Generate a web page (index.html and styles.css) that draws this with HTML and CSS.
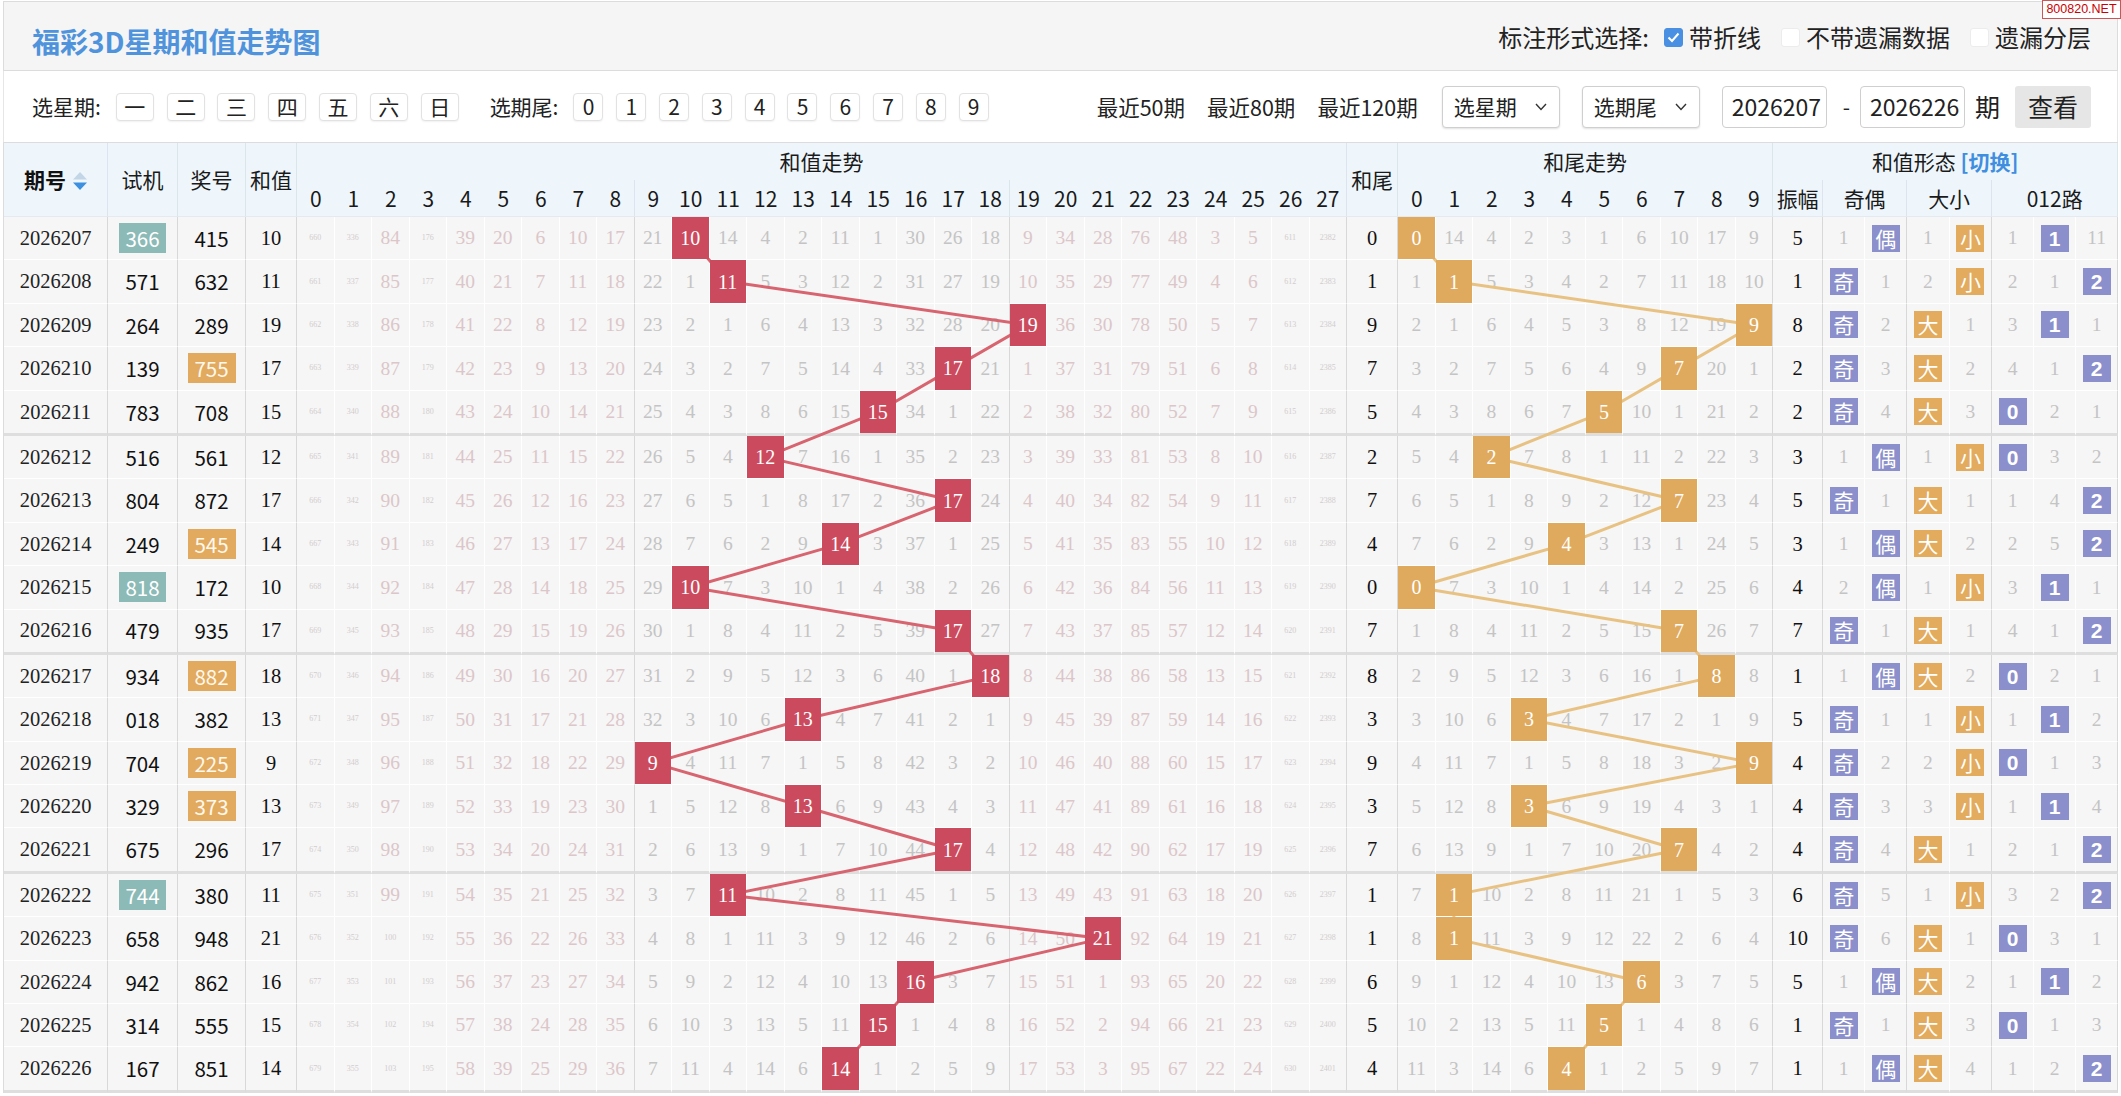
FILE: index.html
```html
<!DOCTYPE html>
<html lang="zh-CN">
<head>
<meta charset="utf-8">
<title>福彩3D星期和值走势图</title>
<link rel="stylesheet" href="styles.css">
</head>
<body>
<div class="page">
  <div class="topbar">
    <h1 class="title">福彩3D星期和值走势图</h1>
    <div class="marks">
      <span class="marks-label">标注形式选择:</span>
      <span class="mark"><span class="cb on"><svg width="17" height="17" viewBox="0 0 17 17"><path d="M3.5 8.5 L7 12 L13.5 4.5" fill="none" stroke="#fff" stroke-width="2"/></svg></span>带折线</span>
      <span class="mark"><span class="cb"></span>不带遗漏数据</span>
      <span class="mark"><span class="cb"></span>遗漏分层</span>
    </div>
  </div>
  <div class="filters">
    <div class="fgroup">
      <span class="flabel">选星期:</span>
      <span class="pill w">一</span><span class="pill w">二</span><span class="pill w">三</span><span class="pill w">四</span><span class="pill w">五</span><span class="pill w">六</span><span class="pill w">日</span>
      <span class="flabel sp">选期尾:</span>
      <span class="pill">0</span><span class="pill">1</span><span class="pill">2</span><span class="pill">3</span><span class="pill">4</span><span class="pill">5</span><span class="pill">6</span><span class="pill">7</span><span class="pill">8</span><span class="pill">9</span>
    </div>
    <div class="fgroup">
      <span class="recent">最近50期</span>
      <span class="recent">最近80期</span>
      <span class="recent last">最近120期</span>
      <span class="sel">选星期<svg width="12" height="8" viewBox="0 0 12 8"><path d="M1 1 L6 6.5 L11 1" fill="none" stroke="#333" stroke-width="1.4"/></svg></span>
      <span class="sel">选期尾<svg width="12" height="8" viewBox="0 0 12 8"><path d="M1 1 L6 6.5 L11 1" fill="none" stroke="#333" stroke-width="1.4"/></svg></span>
      <span class="inp">2026207</span>
      <span class="dash">-</span>
      <span class="inp">2026226</span>
      <span class="qi">期</span>
      <span class="btn">查看</span>
    </div>
  </div>
  <div class="chart" id="chart">
    <table class="trend">
      <colgroup>
        <col class="c-qh"><col class="c-sj"><col class="c-jh"><col class="c-hz">
        <col span="28" class="c-t">
        <col class="c-hw">
        <col span="10" class="c-t">
        <col class="c-zf">
        <col span="2" class="c-oe">
        <col span="2" class="c-bs">
        <col span="3" class="c-r">
      </colgroup>
      <thead>
        <tr class="h1">
          <th rowspan="2" class="gb rs qh-h">期号<svg class="sort" width="14" height="19" viewBox="0 0 14 19"><path d="M7 0 L14 7.5 L0 7.5 Z" fill="#c3d6e8"/><path d="M0 10.5 L14 10.5 L7 18 Z" fill="#3d8fe0"/></svg></th>
          <th rowspan="2" class="gb rs">试机</th>
          <th rowspan="2" class="gb rs">奖号</th>
          <th rowspan="2" class="gb rs">和值</th>
          <th colspan="28" class="gb">和值走势</th>
          <th rowspan="2" class="gb rs">和尾</th>
          <th colspan="10" class="gb">和尾走势</th>
          <th colspan="8" class="gb">和值形态 <b class="switch">[切换]</b></th>
        </tr>
        <tr class="h2">
          <th>0</th><th>1</th><th>2</th><th>3</th><th>4</th><th>5</th><th>6</th><th>7</th><th class="gb">8</th>
          <th>9</th><th>10</th><th>11</th><th>12</th><th>13</th><th>14</th><th>15</th><th>16</th><th>17</th><th class="gb">18</th>
          <th>19</th><th>20</th><th>21</th><th>22</th><th>23</th><th>24</th><th>25</th><th>26</th><th class="gb">27</th>
          <th>0</th><th>1</th><th>2</th><th>3</th><th>4</th><th>5</th><th>6</th><th>7</th><th>8</th><th class="gb">9</th>
          <th class="gb">振幅</th>
          <th colspan="2" class="gb">奇偶</th>
          <th colspan="2" class="gb">大小</th>
          <th colspan="3" class="gb">012路</th>
        </tr>
      </thead>
      <tbody id="rows"></tbody>
    </table>
    <svg class="lines" id="lines"></svg>
  </div>
</div>
<div class="wm">800820.NET</div>
<script src="app.js"></script>
</body>
</html>
```

FILE: styles.css
```css
* { box-sizing: border-box; }
html, body { margin: 0; padding: 0; background: #fff; }
body { font-family: "Noto Sans CJK SC", "Liberation Sans", sans-serif; color: #222; }

.page { margin: 1px 0 0 3px; width: 2115px; }

.topbar {
  height: 70px;
  background: #f5f5f5;
  border: 1px solid #dcdcdc;
  display: flex;
  align-items: center;
  justify-content: space-between;
  padding: 0 26px 0 28px;
}
.title { margin: 9px 0 0; font-size: 28px; line-height: 1; font-weight: 700; color: #4f93dc; }
.marks { display: flex; align-items: center; font-size: 24px; line-height: 1; color: #222; margin-top: 2px; }
.marks-label { margin-right: 15px; }
.mark { display: flex; align-items: center; }
.mark + .mark { margin-left: 20px; }
.cb { width: 19px; height: 19px; border-radius: 3px; margin-right: 6px; display: flex; align-items: center; justify-content: center; background: #fff; border: 1px solid #ececec; }
.cb.on { background: #4a90e2; border-color: #4a90e2; }

.filters {
  height: 71px;
  display: flex;
  align-items: center;
  justify-content: space-between;
  padding: 0 26px 0 28px;
  border-left: 1px solid #e6e6e6;
  border-right: 1px solid #e6e6e6;
}
.fgroup { display: flex; align-items: center; font-size: 21px; line-height: 1; }
.flabel { margin-right: 15px; }
.flabel.sp { margin-left: 31px; }
.pill {
  width: 30px; height: 28px;
  border: 1px solid #e2e2e2; border-radius: 4px; background: #fff;
  box-shadow: 0 1px 2px rgba(0,0,0,.06);
  display: flex; align-items: center; justify-content: center;
  font-size: 21px;
}
.pill.w { width: 38px; }
.pill + .pill { margin-left: 12.8px; }
.recent { margin-right: 22px; font-size: 21.5px; }
.recent.last { margin-right: 24px; }
.sel {
  width: 118px; height: 42px;
  border: 1px solid #cfcfcf; border-radius: 4px; background: #fff;
  box-shadow: 0 1px 2px rgba(0,0,0,.12);
  display: flex; align-items: center; justify-content: space-between;
  padding: 0 12px 0 11px; font-size: 21px; margin-right: 22px;
}
.inp {
  width: 105px; height: 42px;
  border: 1px solid #cfcfcf; border-radius: 4px; background: #fff;
  display: flex; align-items: center; padding-left: 9px; font-size: 23px;
}
.dash { margin: 0 10px 0 16px; font-size: 21px; }
.qi { margin-left: 10px; font-size: 25px; }
.btn {
  margin-left: 15px; width: 76px; height: 42px; border-radius: 3px;
  background: #e6e6e6; font-size: 25px; color: #222;
  display: flex; align-items: center; justify-content: center;
}

.chart { position: relative; }
.trend {
  border-collapse: separate; border-spacing: 0; table-layout: fixed;
  width: 2115px;
  border-top: 1px solid #dcdcdc; border-left: 1px solid #dcdcdc;
}
.c-qh { width: 104px; }
.c-sj { width: 70px; }
.c-jh { width: 68px; }
.c-hz { width: 51px; }
.c-t { width: 37.5px; }
.c-hw { width: 51px; }
.c-zf { width: 50px; }
.c-oe { width: 42px; }
.c-bs { width: 42.5px; }
.c-r { width: 42px; }

.trend th {
  background: #eef6fc; font-weight: 400; font-size: 21px; color: #1a1a1a;
  padding: 0; line-height: 1; text-align: center; white-space: nowrap;
}
.trend .h1 th { height: 37px; }
.trend .h2 th { height: 37px; border-bottom: 1px solid #e3eaf1; }
.trend th.rs { border-bottom: 1px solid #e3eaf1; }
.trend th.gb { border-right: 1px solid #dde5ec; }
.trend th.qh-h { font-weight: 700; color: #111; }
.sort { vertical-align: -3px; margin-left: 7px; }
.switch { color: #3f8ee0; font-weight: 700; }

.trend td {
  padding: 0; height: 43.4px;
  border-bottom: 1px solid #fff; border-right: 1px solid #fff;
  background: #f6f6f6; text-align: center; vertical-align: middle;
  font-family: "Liberation Serif", serif; font-size: 19.5px; line-height: 1;
  color: #c4c4c4; white-space: nowrap;
}
.trend tr.grp td { height: 45.4px; border-bottom: 3px solid #dedede; }
.trend td.gb { border-right: 1px solid #d8d8d8; }
.trend td.qh { color: #222; font-size: 20.5px; }
.trend td.hz, .trend td.hw, .trend td.zf { color: #111; font-size: 20.5px; }
.trend td.sj, .trend td.jh { font-family: "Noto Sans CJK SC", "Liberation Sans", sans-serif; color: #111; font-size: 20.5px; }
.trend td.pk { color: #dcc6c9; }
.trend td.tiny { font-size: 8px; color: #d2cccd; }

.hit {
  position: relative; z-index: 2; height: 42.4px;
  display: flex; align-items: center; justify-content: center;
  color: #fff; font-size: 20px;
}
.hit.red { background: #cc4a5d; }
.hit.org { background: #e0aa5e; }
.hl { display: inline-block; width: 47px; height: 30px; line-height: 30px; color: #fff; }
.hl.teal { background: #8cbab7; }
.hl.org { background: #e2aa5f; width: 48px; color: #fff8ec; }
.tag {
  display: inline-flex; width: 28px; height: 27px;
  align-items: center; justify-content: center;
  color: #fff; font-family: "Noto Sans CJK SC", sans-serif; font-size: 21px; line-height: 1;
}
.tag.blue { background: #8b8fcb; }
.tag.org { background: #e2ab5d; }
.tag.num { font-family: "Liberation Sans", sans-serif; font-weight: 700; font-size: 21px; }

.lines { position: absolute; left: 0; top: 0; z-index: 1; pointer-events: none; overflow: visible; }

.wm {
  position: absolute; top: 0; right: 0; width: 79px; height: 19px;
  border: 1px solid #c55; background: #fff; color: #c00;
  font-family: "Liberation Sans", sans-serif; font-size: 12.5px; line-height: 17px;
  text-align: center; z-index: 5;
}
```

FILE: app.js
```js
(function () {
  var data = [
    ['2026207','366','415'],['2026208','571','632'],['2026209','264','289'],['2026210','139','755'],['2026211','783','708'],
    ['2026212','516','561'],['2026213','804','872'],['2026214','249','545'],['2026215','818','172'],['2026216','479','935'],
    ['2026217','934','882'],['2026218','018','382'],['2026219','704','225'],['2026220','329','373'],['2026221','675','296'],
    ['2026222','744','380'],['2026223','658','948'],['2026224','942','862'],['2026225','314','555'],['2026226','167','851']
  ];
  var sjHi = {0:1, 8:1, 15:1};
  var jhHi = {3:1, 7:1, 10:1, 12:1, 13:1};
  var sm = [660,336,84,176,39,20,6,10,17,21,0,14,4,2,11,1,30,26,18,9,34,28,76,48,3,5,611,2382];
  var tm = [0,14,4,2,3,1,6,10,17,9];
  var oe = [1,0], bs = [1,0], r3 = [1,0,11];
  var prevSum = null, html = '';

  data.forEach(function (d, i) {
    var n = d[2];
    var sum = (+n[0]) + (+n[1]) + (+n[2]);
    var tail = sum % 10, c;
    if (i > 0) {
      for (c = 0; c < 28; c++) sm[c]++;
      sm[sum] = 0;
      for (c = 0; c < 10; c++) tm[c]++;
      tm[tail] = 0;
      oe[0]++; oe[1]++; oe[sum % 2 === 1 ? 0 : 1] = 0;
      bs[0]++; bs[1]++; bs[sum >= 14 ? 0 : 1] = 0;
      r3[0]++; r3[1]++; r3[2]++; r3[sum % 3] = 0;
    }
    var amp = i === 0 ? 5 : Math.abs(sum - prevSum);
    prevSum = sum;

    var r = '<tr' + (i % 5 === 4 ? ' class="grp"' : '') + '>';
    r += '<td class="qh gb">' + d[0] + '</td>';
    r += '<td class="sj gb">' + (sjHi[i] ? '<span class="hl teal">' + d[1] + '</span>' : d[1]) + '</td>';
    r += '<td class="jh gb">' + (jhHi[i] ? '<span class="hl org">' + n + '</span>' : n) + '</td>';
    r += '<td class="hz gb">' + sum + '</td>';
    for (c = 0; c < 28; c++) {
      var gb = (c === 8 || c === 18 || c === 27) ? ' gb' : '';
      if (sm[c] === 0) {
        r += '<td class="h' + gb + '"><div class="hit red">' + c + '</div></td>';
      } else {
        var cls = (c <= 8 || c >= 19) ? 'pk' : 'gy';
        if (sm[c] >= 100) cls += ' tiny';
        r += '<td class="' + cls + gb + '">' + sm[c] + '</td>';
      }
    }
    r += '<td class="hw gb">' + tail + '</td>';
    for (c = 0; c < 10; c++) {
      var gb2 = c === 9 ? ' gb' : '';
      if (tm[c] === 0) r += '<td class="h' + gb2 + '"><div class="hit org">' + c + '</div></td>';
      else r += '<td class="gy' + gb2 + '">' + tm[c] + '</td>';
    }
    r += '<td class="zf gb">' + amp + '</td>';
    var oeL = ['奇','偶'];
    for (c = 0; c < 2; c++) r += '<td class="gy' + (c === 1 ? ' gb' : '') + '">' + (oe[c] === 0 ? '<span class="tag blue">' + oeL[c] + '</span>' : oe[c]) + '</td>';
    var bsL = ['大','小'];
    for (c = 0; c < 2; c++) r += '<td class="gy' + (c === 1 ? ' gb' : '') + '">' + (bs[c] === 0 ? '<span class="tag org">' + bsL[c] + '</span>' : bs[c]) + '</td>';
    for (c = 0; c < 3; c++) r += '<td class="gy' + (c === 2 ? ' gb' : '') + '">' + (r3[c] === 0 ? '<span class="tag blue num">' + c + '</span>' : r3[c]) + '</td>';
    r += '</tr>';
    html += r;
  });
  document.getElementById('rows').innerHTML = html;

  var chart = document.getElementById('chart');
  var svg = document.getElementById('lines');
  var base = chart.getBoundingClientRect();
  svg.setAttribute('width', Math.round(base.width));
  svg.setAttribute('height', Math.round(base.height));
  function pts(sel) {
    var out = [];
    var els = chart.querySelectorAll(sel);
    for (var k = 0; k < els.length; k++) {
      var b = els[k].getBoundingClientRect();
      out.push((b.left + b.width / 2 - base.left).toFixed(1) + ',' + (b.top + b.height / 2 - base.top).toFixed(1));
    }
    return out.join(' ');
  }
  svg.innerHTML =
    '<polyline points="' + pts('.hit.red') + '" fill="none" stroke="#d7646f" stroke-width="3" stroke-linejoin="round"/>' +
    '<polyline points="' + pts('.hit.org') + '" fill="none" stroke="#e8c283" stroke-width="3" stroke-linejoin="round"/>';
})();
```
